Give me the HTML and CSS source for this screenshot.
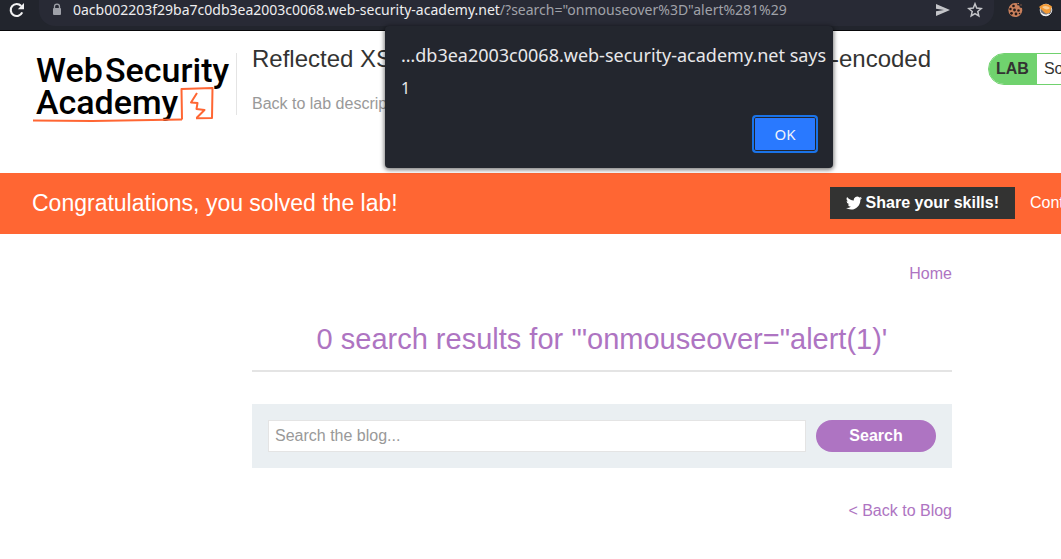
FILE: index.html
```html
<!DOCTYPE html>
<html lang="en">
<head>
<meta charset="utf-8">
<title>Reflected XSS into attribute with angle brackets HTML-encoded</title>
<link rel="stylesheet" href="styles.css">
</head>
<body>
<div class="toolbar">
  <button class="tool" aria-label="Reload">
    <svg width="18" height="18" viewBox="0 0 18 18"><path d="M14.2 11.4A6 6 0 1 1 13.2 5" fill="none" stroke="#f1f1f2" stroke-width="2.2"/><path d="M16 2v6.2H9.8z" fill="#f1f1f2"/></svg>
  </button>
  <div class="omnibox">
    <svg class="lock" width="10" height="14" viewBox="0 0 10 14"><path d="M2.5 6V3.6a2.5 2.5 0 0 1 5 0V6" fill="none" stroke="#9fa1a9" stroke-width="1.3"/><rect x="1" y="5" width="8" height="7" rx="1" fill="#9fa1a9"/></svg>
    <div class="url"><span class="host">0acb002203f29ba7c0db3ea2003c0068.web-security-academy.net</span>/?search="onmouseover%3D"alert%281%29</div>
    <button class="tool" aria-label="Send page">
      <svg width="16" height="16" viewBox="0 0 16 16"><path d="M1 2l14 6-14 6V9.200l8-1.200-8-1.200z" fill="#c4c5c9"/></svg>
    </button>
    <button class="tool" aria-label="Bookmark this page">
      <svg width="16" height="16" viewBox="0 0 16 16"><path d="M8 1.800l1.700 4.300 4.500.4-3.400 3 1 4.500L8 11.600 4.200 14l1-4.500-3.400-3 4.500-.4z" fill="none" stroke="#c4c5c9" stroke-width="1.500"/></svg>
    </button>
  </div>
  <div class="extensions">
    <button class="tool" aria-label="Cookie editor">
      <svg width="16" height="16" viewBox="0 0 16 16"><path d="M8 1l2 .3.3 2 2 .2.500 2 2.200.6.300 2.400A7 7 0 1 1 8 1z" fill="#c9805c"/><path d="M10.500 1.500h1.500M13.500 3h1" stroke="#c9805c" stroke-width="1.200"/><g fill="#251a1a"><circle cx="6.500" cy="4" r="1.300"/><circle cx="3.500" cy="7" r="1.200"/><circle cx="7.500" cy="8" r="1.400"/><circle cx="11.500" cy="8.500" r="1.300"/><circle cx="4.500" cy="11.300" r="1.400"/><circle cx="9" cy="12" r="1.400"/><circle cx="12.500" cy="11.500" r=".8"/></g></svg>
    </button>
    <button class="tool" aria-label="Proxy switcher">
      <svg width="16" height="16" viewBox="0 0 16 16"><circle cx="8" cy="8" r="5.800" fill="#74767c" stroke="#d9d9da" stroke-width="1"/><path d="M1 5c4-4 9-4 13-.5-1 2-1 3-2 6-3 2-5 1-7-1.500-1-1-2-2-4-4z" fill="#f39a35"/><path d="M4 5c3-2 6-1 8 1-2 2-5 2-8-1z" fill="#f8cd94"/><path d="M3 11c2 2.500 5 3 8 1" stroke="#f4f4f4" stroke-width="1.400" fill="none"/></svg>
    </button>
  </div>
</div>

<div class="page">
  <header class="lab-header">
    <a class="logo" href="#" aria-label="Web Security Academy">
      <svg width="204" height="76" viewBox="0 0 204 76">
        <text class="logo-text" x="4" y="35">Web<tspan x="73">Security</tspan></text>
        <text class="logo-text" x="4" y="67">Academy</text>
        <g fill="none" stroke="#ff6633" stroke-linejoin="round">
          <path d="M1 73.500L60 74l90-1.500" stroke-width="2"/>
          <path d="M150 72.500l-.5-30.500 31-1-.5 30-16 .3" stroke-width="2"/>
          <path d="M165 46l-6 9.500 6.500 .5-1 6 8 1-8 8" stroke-width="2"/>
        </g>
      </svg>
    </a>
    <div class="title">
      <h2>Reflected XSS into attribute with angle brackets HTML-encoded</h2>
      <a class="back" href="#">Back to lab description »</a>
    </div>
    <div class="status"><span class="status-tag">LAB</span><span class="status-text">Solved</span></div>
  </header>

  <section class="banner">
    <h4>Congratulations, you solved the lab!</h4>
    <div class="banner-links">
      <button class="share">
        <svg width="16" height="16" viewBox="0 0 24 24"><path fill="#fff" d="M24 4.560a9.800 9.800 0 0 1-2.830.780 4.930 4.930 0 0 0 2.160-2.720 9.900 9.900 0 0 1-3.120 1.190 4.920 4.920 0 0 0-8.390 4.480A13.970 13.970 0 0 1 1.670 3.150 4.920 4.920 0 0 0 3.190 9.720a4.900 4.900 0 0 1-2.230-.620 4.930 4.930 0 0 0 3.950 4.890 4.930 4.930 0 0 1-2.220.080 4.930 4.930 0 0 0 4.600 3.420A9.870 9.870 0 0 1 0 19.540a13.940 13.940 0 0 0 7.550 2.210c9.140 0 14.310-7.720 13.980-14.650A10 10 0 0 0 24 4.560z"/></svg>
        Share your skills!
      </button>
      <a class="continue" href="#">Continue learning »</a>
    </div>
  </section>

  <main class="content">
    <nav class="nav"><a href="#">Home</a></nav>
    <h1>0 search results for '"onmouseover="alert(1)'</h1>
    <form class="search">
      <input type="text" placeholder="Search the blog..." aria-label="Search the blog">
      <button type="button">Search</button>
    </form>
    <div class="back-blog"><a href="#">&lt; Back to Blog</a></div>
  </main>
</div>

<dialog class="alert" open aria-labelledby="alert-title">
  <div class="alert-title" id="alert-title">…db3ea2003c0068.web-security-academy.net says</div>
  <div class="alert-message">1</div>
  <button class="ok">OK</button>
</dialog>
</body>
</html>
```

FILE: styles.css
```css
* {
  box-sizing: border-box;
}

body {
  margin: 0;
  overflow: hidden;
  position: relative;
  min-height: 100vh;
  background: #fff;
  color: #333332;
  font-family: "Liberation Sans", Arial, sans-serif;
  font-size: 16px;
  line-height: 20px;
}

h1, h2, h4 {
  margin: 0;
  font-weight: normal;
}

a {
  text-decoration: none;
}

button {
  border: 0;
  font: inherit;
}

svg {
  display: block;
  flex: none;
}

.toolbar {
  display: flex;
  align-items: flex-start;
  gap: 13px;
  padding: 0 7px 4px 8px;
  background: #22252d;
  border-bottom: 1px solid #08080a;
  font-family: "Noto Sans", sans-serif;
  font-size: 14px;
}

.tool {
  display: flex;
  align-items: center;
  padding: 0;
  height: 20px;
  background: none;
}

.omnibox {
  flex: 1;
  display: flex;
  align-items: center;
  gap: 16px;
  min-width: 0;
  padding: 0 11px 6px 13px;
  background: #282a35;
  border-radius: 0 0 16px 16px;
}

.lock {
  margin-right: -5px;
}

.url {
  flex: 1;
  min-width: 0;
  overflow: hidden;
  white-space: nowrap;
  color: #a0a2a9;
}

.host {
  color: #eeeef0;
}

.extensions {
  display: flex;
  gap: 15px;
}

.page {
  min-width: 1204px;
}

.lab-header {
  display: flex;
  align-items: flex-start;
  padding: 16px 32px 50px;
}

.logo-text {
  font-family: Roboto, sans-serif;
  font-weight: 500;
  font-size: 34px;
  fill: #000;
}

.title {
  flex: 1;
  padding-left: 15px;
  margin-top: 6px;
  height: 62px;
  border-left: 1px solid #e4e4e4;
  white-space: nowrap;
}

.title h2 {
  font-size: 24px;
  line-height: 28px;
  margin: -8px 0 21px;
}

.back {
  color: #999;
}

.status {
  display: flex;
  width: 184px;
  height: 32px;
  margin-top: 6px;
  border: 1px solid #70d26e;
  border-radius: 16px;
  overflow: hidden;
  line-height: 30px;
}

.status-tag {
  padding: 0 8px 0 7px;
  background: #70d26e;
  font-weight: bold;
}

.status-text {
  padding-left: 7px;
}

.banner {
  display: flex;
  align-items: center;
  justify-content: space-between;
  padding: 14px 32px 15px;
  background: #ff6633;
  color: #fff;
}

.banner h4 {
  font-size: 23px;
  line-height: 32px;
}

.banner-links {
  display: flex;
  align-items: center;
  gap: 15px;
}

.share {
  display: flex;
  align-items: center;
  gap: 4px;
  padding: 0 16px;
  height: 32px;
  background: #333332;
  color: #fff;
  font-weight: bold;
}

.continue {
  color: #fff;
  width: 142px;
  white-space: nowrap;
}

.content {
  width: 700px;
  margin: 0 auto;
  padding-top: 30px;
}

.content a {
  color: #ae74c2;
}

.nav {
  text-align: right;
}

.content h1 {
  margin-top: 36px;
  padding-bottom: 12px;
  border-bottom: 2px solid #e4e4e4;
  color: #ae74c2;
  font-size: 29px;
  line-height: 38px;
  text-align: center;
}

.search {
  display: flex;
  gap: 10px;
  margin-top: 32px;
  padding: 16px;
  background: #eaeff2;
}

.search input {
  flex: 1;
  min-width: 0;
  height: 32px;
  padding: 0 6px;
  border: 1px solid #e4e4e4;
  background: #fff;
  font: inherit;
}

.search input::placeholder {
  color: #999;
}

.search button {
  width: 120px;
  height: 32px;
  border-radius: 16px;
  background: #ae74c2;
  color: #fff;
  font-weight: bold;
}

.back-blog {
  margin-top: 33px;
  text-align: right;
}

.alert {
  position: absolute;
  inset: 26px auto auto 385px;
  display: flex;
  flex-direction: column;
  width: 448px;
  margin: 0;
  padding: 17px 15px 15px 16px;
  border: 0;
  border-radius: 4px;
  background: #23262e;
  color: #e8e8ea;
  box-shadow: 0 1px 4px 1px rgba(0, 0, 0, 0.5);
  font-family: "Noto Sans", sans-serif;
}

.alert-title {
  font-size: 18px;
  line-height: 24px;
  white-space: nowrap;
}

.alert-message {
  margin-top: 11px;
  font-size: 16px;
}

.ok {
  align-self: flex-end;
  width: 66px;
  height: 38px;
  margin-top: 17px;
  border: 2px solid #1a73e8;
  border-radius: 4px;
  background: #2979ff;
  box-shadow: inset 0 0 0 1px #23262e;
  color: #f1f4fb;
  font-size: 15px;
}
```
